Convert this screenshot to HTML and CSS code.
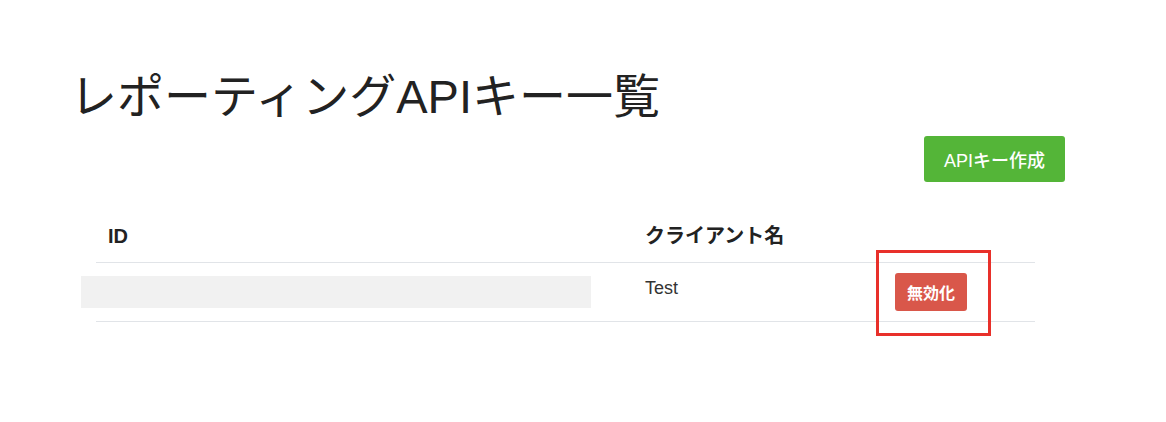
FILE: index.html
```html
<!DOCTYPE html>
<html lang="ja">
<head>
  <meta charset="UTF-8">
  <meta name="viewport" content="width=device-width, initial-scale=1.0">
  <title>レポーティングAPIキー一覧</title>
  <link rel="stylesheet" href="styles.css">
</head>
<body>
  <div id="page-wrapper">
    <h1>レポーティングAPIキー一覧</h1>
    <div class="actions">
      <button class="btn btn-create">APIキー作成</button>
    </div>

    <div class="table-wrap">
      <table class="key-table">
        <colgroup>
          <col class="col-id">
          <col class="col-name">
          <col class="col-action">
        </colgroup>
        <thead>
          <tr>
            <th>ID</th>
            <th>クライアント名</th>
            <th></th>
          </tr>
        </thead>
        <tbody>
          <tr>
            <td class="cell-id"><span class="redacted"></span></td>
            <td>Test</td>
            <td class="cell-action"><button class="btn btn-disable">無効化</button></td>
          </tr>
        </tbody>
      </table>
      <!-- 注釈の枠 -->
      <div class="highlight"></div>
    </div>
  </div>
</body>
</html>
```

FILE: styles.css
```css
body {
  font-family: "Liberation Sans", "Noto Sans CJK JP", sans-serif;
  margin: 0;
  padding: 0;
  background-color: #fff;
  color: #222;
}
#page-wrapper {
  padding: 68px 101px 40px 70px;
}
h1 {
  margin: 0;
  font-size: 47px;
  font-weight: normal;
  line-height: 58px;
  color: #222;
}
.actions {
  display: flex;
  justify-content: flex-end;
  margin-top: 10px;
}
.btn {
  font-family: inherit;
  border: none;
  border-radius: 3px;
  color: #fff;
  cursor: pointer;
}
.btn-create {
  background-color: #54b538;
  height: 46px;
  padding: 0 20px;
  font-size: 18px;
  font-weight: 500;
}
.btn-disable {
  background-color: #d9574a;
  height: 38px;
  padding: 0 12px;
  font-size: 16px;
  font-weight: bold;
}
.table-wrap {
  position: relative;
  margin: 28px 30px 0 26px;
}
.key-table {
  width: 100%;
  border-collapse: collapse;
  table-layout: fixed;
}
.col-id {
  width: 537px;
}
.col-name {
  width: 250px;
}
th, td {
  padding: 12px;
  text-align: left;
  vertical-align: top;
  line-height: 1.5;
}
th {
  font-size: 20px;
  line-height: 28px;
  font-weight: bold;
  color: #222;
  border-bottom: 1px solid #e1e4e8;
}
td {
  font-size: 18px;
  color: #333;
  border-bottom: 1px solid #e1e4e8;
}
.cell-id {
  position: relative;
}
.redacted {
  position: absolute;
  left: -15px;
  top: 13px;
  width: 510px;
  height: 32px;
  background-color: #f1f1f1;
}
.cell-action {
  padding: 10px 12px;
}
.highlight {
  position: absolute;
  box-sizing: border-box;
  left: 780px;
  top: 40px;
  width: 115px;
  height: 86px;
  border: 3px solid #e8302a;
}
```
